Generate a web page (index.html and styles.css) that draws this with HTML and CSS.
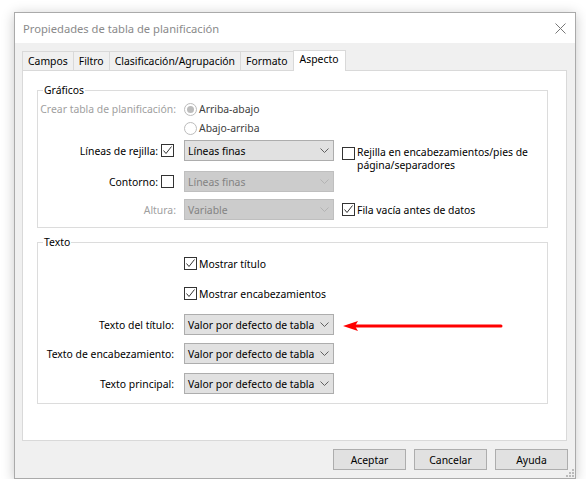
FILE: index.html
```html
<!DOCTYPE html>
<html lang="es">
<head>
  <meta charset="UTF-8">
  <title>Propiedades de tabla de planificación</title>
  <link rel="stylesheet" href="styles.css">
</head>
<body>
  <div class="window">
    <div class="titlebar">
      <span class="title">Propiedades de tabla de planificación</span>
      <svg class="close" width="11" height="11" viewBox="0 0 11 11">
        <path d="M0.5 0.5 L10.5 10.5 M10.5 0.5 L0.5 10.5" stroke="#777" stroke-width="1" fill="none"/>
      </svg>
    </div>

    <div class="content">
      <div class="tabs">
        <div class="tab">Campos</div>
        <div class="tab">Filtro</div>
        <div class="tab">Clasificación/Agrupación</div>
        <div class="tab">Formato</div>
        <div class="tab active">Aspecto</div>
      </div>

      <div class="panel">
        <div class="group">
          <span class="legend">Gráficos</span>
          <div class="form graficos">
            <div class="cell lbl disabled centered r1">Crear tabla de planificación:</div>
            <div class="cell radio-row centered r1 c2"><span class="radio checked"></span><span class="radio-text">Arriba-abajo</span></div>

            <div class="cell radio-row centered r2 c2"><span class="radio"></span><span class="radio-text">Abajo-arriba</span></div>

            <div class="cell lbl r3">Líneas de rejilla:<span class="check on"><svg width="11" height="11" viewBox="0 0 11 11"><path d="M1.5 5.5 L4 8.5 L9.5 1.5" stroke="#333" fill="none"/></svg></span></div>
            <div class="select r3"><span>Líneas finas</span><svg width="9" height="5" viewBox="0 0 9 5"><path d="M0.5 0.5 L4.5 4.5 L8.5 0.5" stroke="#606060" fill="none"/></svg></div>
            <div class="side">
              <span class="check"></span>
              <span class="side-text">Rejilla en encabezamientos/pies de<br>página/separadores</span>
            </div>

            <div class="cell lbl r4">Contorno:<span class="check"></span></div>
            <div class="select disabled r4"><span>Líneas finas</span><svg width="9" height="5" viewBox="0 0 9 5"><path d="M0.5 0.5 L4.5 4.5 L8.5 0.5" stroke="#b3b3b3" fill="none"/></svg></div>

            <div class="cell lbl disabled r5">Altura:</div>
            <div class="select disabled r5"><span>Variable</span><svg width="9" height="5" viewBox="0 0 9 5"><path d="M0.5 0.5 L4.5 4.5 L8.5 0.5" stroke="#b3b3b3" fill="none"/></svg></div>
            <div class="cell r5 c3"><span class="check on"><svg width="11" height="11" viewBox="0 0 11 11"><path d="M1.5 5.5 L4 8.5 L9.5 1.5" stroke="#333" fill="none"/></svg></span><span class="check-text">Fila vacía antes de datos</span></div>
          </div>
        </div>

        <div class="group texto-group">
          <span class="legend">Texto</span>
          <div class="form texto">
            <div class="cell r1 c2"><span class="check on"><svg width="11" height="11" viewBox="0 0 11 11"><path d="M1.5 5.5 L4 8.5 L9.5 1.5" stroke="#333" fill="none"/></svg></span><span class="check-text">Mostrar título</span></div>
            <div class="cell r2 c2"><span class="check on"><svg width="11" height="11" viewBox="0 0 11 11"><path d="M1.5 5.5 L4 8.5 L9.5 1.5" stroke="#333" fill="none"/></svg></span><span class="check-text">Mostrar encabezamientos</span></div>

            <div class="cell lbl r3">Texto del título:</div>
            <div class="select r3"><span>Valor por defecto de tabla</span><svg width="9" height="5" viewBox="0 0 9 5"><path d="M0.5 0.5 L4.5 4.5 L8.5 0.5" stroke="#606060" fill="none"/></svg></div>

            <div class="cell lbl r4">Texto de encabezamiento:</div>
            <div class="select r4"><span>Valor por defecto de tabla</span><svg width="9" height="5" viewBox="0 0 9 5"><path d="M0.5 0.5 L4.5 4.5 L8.5 0.5" stroke="#606060" fill="none"/></svg></div>

            <div class="cell lbl r5">Texto principal:</div>
            <div class="select r5"><span>Valor por defecto de tabla</span><svg width="9" height="5" viewBox="0 0 9 5"><path d="M0.5 0.5 L4.5 4.5 L8.5 0.5" stroke="#606060" fill="none"/></svg></div>
          </div>
        </div>

        <!-- red callout pointing at the title text dropdown -->
        <svg class="arrow" width="164" height="12" viewBox="0 0 164 12">
          <line x1="14" y1="6" x2="161" y2="6" stroke="#f00" stroke-width="3" stroke-linecap="round"/>
          <polygon points="3,6 18,1 15,6 18,11" fill="#f00"/>
        </svg>
      </div>

      <div class="buttons">
        <div class="btn">Aceptar</div>
        <div class="btn">Cancelar</div>
        <div class="btn">Ayuda</div>
      </div>

      <svg class="grip" width="9" height="9" viewBox="0 0 9 9">
        <rect x="7" y="1" width="2" height="2" fill="#bbb"/>
        <rect x="4" y="4" width="2" height="2" fill="#bbb"/>
        <rect x="7" y="4" width="2" height="2" fill="#bbb"/>
        <rect x="1" y="7" width="2" height="2" fill="#bbb"/>
        <rect x="4" y="7" width="2" height="2" fill="#bbb"/>
        <rect x="7" y="7" width="2" height="2" fill="#bbb"/>
      </svg>
    </div>
  </div>
</body>
</html>
```

FILE: styles.css
```css
body { margin: 0; padding: 12px 0 0 14px; background: #fff; font-family: "Noto Sans", sans-serif; font-size: 10.4px; color: #000; }

.window {
  width: 562px;
  height: 467px;
  box-sizing: border-box;
  border: 1px solid #aaa;
  background: #f0f0f0;
  box-shadow: 0 2px 12px rgba(0, 0, 0, 0.22);
  display: flex;
  flex-direction: column;
}

.titlebar { height: 30px; flex: none; background: #fff; display: flex; align-items: center; justify-content: space-between; padding: 0 9px 0 8px; }
.title { font-size: 11.2px; color: #8a8a8a; }

.content { flex: 1; position: relative; padding: 7px 8px 8px 7px; display: flex; flex-direction: column; }

/* tab strip */
.tabs { display: flex; align-items: flex-end; height: 20px; }
.tab {
  box-sizing: border-box;
  height: 19px;
  border: 1px solid #d9d9d9;
  border-bottom: none;
  padding: 0 5px;
  line-height: 18px;
  margin-right: -1px;
}
.tab.active { height: 21px; line-height: 17px; background: #fff; margin: 0 -2px -1px 0; padding: 0 6px 2px; position: relative; z-index: 1; }

.panel { height: 371px; box-sizing: border-box; border: 1px solid #d9d9d9; background: #fff; padding: 19px 18px 0 14px; position: relative; }

.group { border: 1px solid #dcdcdc; position: relative; }
.texto-group { margin-top: 14px; }
.legend { position: absolute; top: -8px; left: 5px; background: #fff; padding: 0 1px; line-height: 15px; }

.form { display: grid; grid-template-columns: 138px 150px 1fr; column-gap: 8px; align-items: end; }
.graficos { grid-template-rows: 16px 22px 22px 31px 28px; padding: 10px 0 7px; }
.texto { grid-template-rows: 31px 30px 31px 29px 30px; padding: 0 0 9px; }

.cell { height: 21px; display: flex; align-items: center; white-space: nowrap; }
.cell.centered { align-self: center; }
.lbl { justify-content: flex-end; grid-column: 1; }
.texto .lbl { padding-right: 2px; }
.disabled { color: #a0a0a0; }

.r1 { grid-row: 1; }
.r2 { grid-row: 2; }
.r3 { grid-row: 3; }
.r4 { grid-row: 4; }
.r5 { grid-row: 5; }
.c2 { grid-column: 2 / span 2; }
.c3 { grid-column: 3; }

.radio { width: 13px; height: 13px; box-sizing: border-box; border: 1px solid #bcbcbc; border-radius: 50%; background: #fff; display: inline-flex; align-items: center; justify-content: center; flex: none; }
.radio.checked::after { content: ""; width: 7px; height: 7px; border-radius: 50%; background: #bcbcbc; }
.radio-text { margin-left: 2px; color: #404040; }

.check { width: 13px; height: 13px; box-sizing: border-box; border: 1px solid #333; background: #fff; display: inline-flex; flex: none; }
.lbl .check { margin: 0 2px 0 3px; }
.check-text { margin-left: 2px; }

.select {
  width: 150px;
  height: 21px;
  box-sizing: border-box;
  border: 1px solid #adadad;
  background: #e1e1e1;
  display: flex;
  align-items: center;
  justify-content: space-between;
  padding: 0 4px 0 3px;
  grid-column: 2;
  white-space: nowrap;
}
.select.disabled { background: #ccc; border-color: #bfbfbf; color: #838383; }

.side { grid-column: 3; grid-row: 3 / span 2; align-self: start; display: flex; align-items: flex-start; margin-top: 8px; }
.side-text { margin-left: 2px; line-height: 13px; margin-top: -1px; }

.arrow { position: absolute; left: 317px; top: 249px; }

.buttons { display: flex; justify-content: flex-end; gap: 8px; margin-top: 8px; margin-right: -1px; }
.btn { width: 73px; height: 21px; box-sizing: border-box; border: 1px solid #adadad; background: #e1e1e1; display: flex; align-items: center; justify-content: center; }

.grip { position: absolute; right: 1px; bottom: 1px; }
```
